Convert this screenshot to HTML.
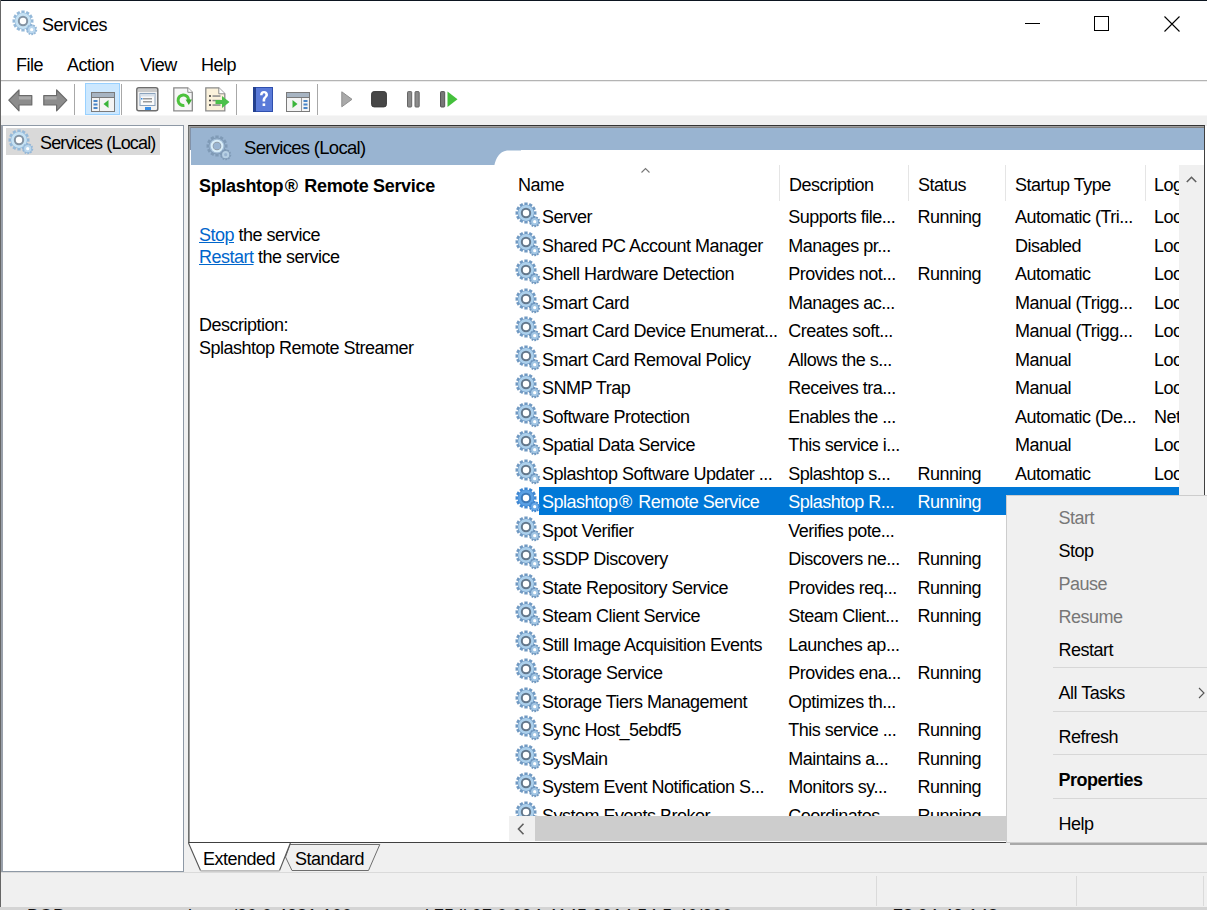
<!DOCTYPE html>
<html><head><meta charset="utf-8">
<style>
*{margin:0;padding:0;box-sizing:border-box}
html,body{width:1207px;height:910px;overflow:hidden;background:#fff}
body{position:relative;font-family:"Liberation Sans",sans-serif;font-size:18px;color:#000;letter-spacing:-0.5px}
.a{position:absolute;white-space:nowrap;line-height:20px}
.blk{position:absolute}
svg{position:absolute;overflow:visible}
</style></head><body>
<svg width="0" height="0" style="position:absolute">
<defs>
<symbol id="gear" viewBox="0 0 30 30">
 <path d="M14.57 21.25 L14.69 23.46 L11.31 23.46 L11.43 21.25 L10.24 20.93 L9.23 22.91 L6.30 21.22 L7.51 19.36 L6.64 18.49 L4.78 19.70 L3.09 16.77 L5.07 15.76 L4.75 14.57 L2.54 14.69 L2.54 11.31 L4.75 11.43 L5.07 10.24 L3.09 9.23 L4.78 6.30 L6.64 7.51 L7.51 6.64 L6.30 4.78 L9.23 3.09 L10.24 5.07 L11.43 4.75 L11.31 2.54 L14.69 2.54 L14.57 4.75 L15.76 5.07 L16.77 3.09 L19.70 4.78 L18.49 6.64 L19.36 7.51 L21.22 6.30 L22.91 9.23 L20.93 10.24 L21.25 11.43 L23.46 11.31 L23.46 14.69 L21.25 14.57 L20.93 15.76 L22.91 16.77 L21.22 19.70 L19.36 18.49 L18.49 19.36 L19.70 21.22 L16.77 22.91 L15.76 20.93Z" fill="#7099c2"/>
 <circle cx="13" cy="13" r="7.9" fill="#acd0ec"/>
 <circle cx="13" cy="13" r="5.2" fill="#62778c" opacity="1"/>
 <circle cx="13" cy="13" r="3.2" fill="#fff"/>
 <path d="M26.00 21.64 L27.30 21.80 L26.90 23.79 L25.64 23.43 L25.21 24.18 L26.17 25.07 L24.68 26.44 L23.87 25.41 L23.08 25.77 L23.33 27.06 L21.32 27.29 L21.27 25.98 L20.43 25.81 L19.87 26.99 L18.11 26.00 L18.84 24.91 L18.26 24.27 L17.11 24.91 L16.27 23.07 L17.50 22.62 L17.40 21.76 L16.10 21.60 L16.50 19.61 L17.76 19.97 L18.19 19.22 L17.23 18.33 L18.72 16.96 L19.53 17.99 L20.32 17.63 L20.07 16.34 L22.08 16.11 L22.13 17.42 L22.97 17.59 L23.53 16.41 L25.29 17.40 L24.56 18.49 L25.14 19.13 L26.29 18.49 L27.13 20.33 L25.90 20.78Z" fill="#6f97bf"/>
 <circle cx="21.7" cy="21.7" r="3.6" fill="#a2c6e4"/>
 <circle cx="21.7" cy="21.7" r="1.6" fill="#fff"/>
</symbol><symbol id="gears" viewBox="0 0 30 30">
 <path d="M14.57 21.25 L14.69 23.46 L11.31 23.46 L11.43 21.25 L10.24 20.93 L9.23 22.91 L6.30 21.22 L7.51 19.36 L6.64 18.49 L4.78 19.70 L3.09 16.77 L5.07 15.76 L4.75 14.57 L2.54 14.69 L2.54 11.31 L4.75 11.43 L5.07 10.24 L3.09 9.23 L4.78 6.30 L6.64 7.51 L7.51 6.64 L6.30 4.78 L9.23 3.09 L10.24 5.07 L11.43 4.75 L11.31 2.54 L14.69 2.54 L14.57 4.75 L15.76 5.07 L16.77 3.09 L19.70 4.78 L18.49 6.64 L19.36 7.51 L21.22 6.30 L22.91 9.23 L20.93 10.24 L21.25 11.43 L23.46 11.31 L23.46 14.69 L21.25 14.57 L20.93 15.76 L22.91 16.77 L21.22 19.70 L19.36 18.49 L18.49 19.36 L19.70 21.22 L16.77 22.91 L15.76 20.93Z" fill="#3f87d2"/>
 <circle cx="13" cy="13" r="7.9" fill="#5aa0e4"/>
 <circle cx="13" cy="13" r="5.2" fill="#3b78b8" opacity="1"/>
 <circle cx="13" cy="13" r="3.2" fill="#fff"/>
 <path d="M26.00 21.64 L27.30 21.80 L26.90 23.79 L25.64 23.43 L25.21 24.18 L26.17 25.07 L24.68 26.44 L23.87 25.41 L23.08 25.77 L23.33 27.06 L21.32 27.29 L21.27 25.98 L20.43 25.81 L19.87 26.99 L18.11 26.00 L18.84 24.91 L18.26 24.27 L17.11 24.91 L16.27 23.07 L17.50 22.62 L17.40 21.76 L16.10 21.60 L16.50 19.61 L17.76 19.97 L18.19 19.22 L17.23 18.33 L18.72 16.96 L19.53 17.99 L20.32 17.63 L20.07 16.34 L22.08 16.11 L22.13 17.42 L22.97 17.59 L23.53 16.41 L25.29 17.40 L24.56 18.49 L25.14 19.13 L26.29 18.49 L27.13 20.33 L25.90 20.78Z" fill="#3f87d2"/>
 <circle cx="21.7" cy="21.7" r="3.6" fill="#6aaae8"/>
 <circle cx="21.7" cy="21.7" r="1.6" fill="#fff"/>
</symbol><symbol id="gearf" viewBox="0 0 30 30">
 <path d="M14.57 21.25 L14.69 23.46 L11.31 23.46 L11.43 21.25 L10.24 20.93 L9.23 22.91 L6.30 21.22 L7.51 19.36 L6.64 18.49 L4.78 19.70 L3.09 16.77 L5.07 15.76 L4.75 14.57 L2.54 14.69 L2.54 11.31 L4.75 11.43 L5.07 10.24 L3.09 9.23 L4.78 6.30 L6.64 7.51 L7.51 6.64 L6.30 4.78 L9.23 3.09 L10.24 5.07 L11.43 4.75 L11.31 2.54 L14.69 2.54 L14.57 4.75 L15.76 5.07 L16.77 3.09 L19.70 4.78 L18.49 6.64 L19.36 7.51 L21.22 6.30 L22.91 9.23 L20.93 10.24 L21.25 11.43 L23.46 11.31 L23.46 14.69 L21.25 14.57 L20.93 15.76 L22.91 16.77 L21.22 19.70 L19.36 18.49 L18.49 19.36 L19.70 21.22 L16.77 22.91 L15.76 20.93Z" fill="#95b9d9"/>
 <circle cx="13" cy="13" r="7.9" fill="#c6e2f4"/>
 <circle cx="13" cy="13" r="5.2" fill="#8393a3" opacity="1"/>
 <circle cx="13" cy="13" r="3.2" fill="#fff"/>
 <path d="M26.00 21.64 L27.30 21.80 L26.90 23.79 L25.64 23.43 L25.21 24.18 L26.17 25.07 L24.68 26.44 L23.87 25.41 L23.08 25.77 L23.33 27.06 L21.32 27.29 L21.27 25.98 L20.43 25.81 L19.87 26.99 L18.11 26.00 L18.84 24.91 L18.26 24.27 L17.11 24.91 L16.27 23.07 L17.50 22.62 L17.40 21.76 L16.10 21.60 L16.50 19.61 L17.76 19.97 L18.19 19.22 L17.23 18.33 L18.72 16.96 L19.53 17.99 L20.32 17.63 L20.07 16.34 L22.08 16.11 L22.13 17.42 L22.97 17.59 L23.53 16.41 L25.29 17.40 L24.56 18.49 L25.14 19.13 L26.29 18.49 L27.13 20.33 L25.90 20.78Z" fill="#93b7d8"/>
 <circle cx="21.7" cy="21.7" r="3.6" fill="#bad7ee"/>
 <circle cx="21.7" cy="21.7" r="1.6" fill="#fff"/>
</symbol><symbol id="gearh" viewBox="0 0 30 30">
 <path d="M14.57 21.25 L14.69 23.46 L11.31 23.46 L11.43 21.25 L10.24 20.93 L9.23 22.91 L6.30 21.22 L7.51 19.36 L6.64 18.49 L4.78 19.70 L3.09 16.77 L5.07 15.76 L4.75 14.57 L2.54 14.69 L2.54 11.31 L4.75 11.43 L5.07 10.24 L3.09 9.23 L4.78 6.30 L6.64 7.51 L7.51 6.64 L6.30 4.78 L9.23 3.09 L10.24 5.07 L11.43 4.75 L11.31 2.54 L14.69 2.54 L14.57 4.75 L15.76 5.07 L16.77 3.09 L19.70 4.78 L18.49 6.64 L19.36 7.51 L21.22 6.30 L22.91 9.23 L20.93 10.24 L21.25 11.43 L23.46 11.31 L23.46 14.69 L21.25 14.57 L20.93 15.76 L22.91 16.77 L21.22 19.70 L19.36 18.49 L18.49 19.36 L19.70 21.22 L16.77 22.91 L15.76 20.93Z" fill="#7f9ab6"/>
 <circle cx="13" cy="13" r="7.6" fill="#9fbad5"/>
 <circle cx="13" cy="13" r="6.3" fill="#d9eef9"/>
 <circle cx="13" cy="13" r="4.3" fill="#8e979f"/>
 <circle cx="13" cy="13" r="3.6" fill="#99b4d1"/>
 <path d="M26.00 21.64 L27.30 21.80 L26.90 23.79 L25.64 23.43 L25.21 24.18 L26.17 25.07 L24.68 26.44 L23.87 25.41 L23.08 25.77 L23.33 27.06 L21.32 27.29 L21.27 25.98 L20.43 25.81 L19.87 26.99 L18.11 26.00 L18.84 24.91 L18.26 24.27 L17.11 24.91 L16.27 23.07 L17.50 22.62 L17.40 21.76 L16.10 21.60 L16.50 19.61 L17.76 19.97 L18.19 19.22 L17.23 18.33 L18.72 16.96 L19.53 17.99 L20.32 17.63 L20.07 16.34 L22.08 16.11 L22.13 17.42 L22.97 17.59 L23.53 16.41 L25.29 17.40 L24.56 18.49 L25.14 19.13 L26.29 18.49 L27.13 20.33 L25.90 20.78Z" fill="#7f9ab6"/>
 <circle cx="21.7" cy="21.7" r="3.6" fill="#b7d0e4"/>
 <circle cx="21.7" cy="21.7" r="1.6" fill="#99b4d1"/>
</symbol>
</defs>
</svg>

<!-- window borders -->
<div class="blk" style="left:0;top:0;width:1207px;height:1px;background:#0c1520"></div>
<div class="blk" style="left:0;top:0;width:1px;height:907px;background:#666"></div>

<!-- title bar -->
<svg style="left:10px;top:8px" width="30" height="30"><use href="#gearf"/></svg>
<div class="a" style="left:42px;top:15px">Services</div>
<!-- caption buttons -->
<div class="blk" style="left:1025px;top:23px;width:15px;height:1px;background:#000"></div>
<div class="blk" style="left:1094px;top:16px;width:15px;height:15px;border:1px solid #000"></div>
<svg style="left:1164px;top:16px" width="16" height="16"><path d="M0.5 0.5L15.5 15.5M15.5 0.5L0.5 15.5" stroke="#000" stroke-width="1.1"/></svg>

<!-- menu bar -->
<div class="a" style="left:16px;top:55px">File</div>
<div class="a" style="left:67px;top:55px">Action</div>
<div class="a" style="left:140px;top:55px">View</div>
<div class="a" style="left:201px;top:55px">Help</div>
<div class="blk" style="left:1px;top:80px;width:1206px;height:1px;background:#b4b4b4"></div><div class="blk" style="left:1px;top:81px;width:1206px;height:1px;background:#ececec"></div>


<!-- toolbar icons -->
<svg style="left:8px;top:89px" width="25" height="23"><path d="M0.8 11.2L11 1v5.5h12.8v9.5H11v5.8z" fill="#8c8c8c" stroke="#6a6a6a" stroke-width="1.2" stroke-linejoin="round"/><path d="M11 7.5h12v3H11z" fill="#a9a9a9"/></svg>
<svg style="left:43px;top:89px" width="25" height="23"><path d="M23.8 11.2L13.6 1v5.5H0.8v9.5h12.8v5.8z" fill="#8c8c8c" stroke="#6a6a6a" stroke-width="1.2" stroke-linejoin="round"/><path d="M1.6 7.5h12v3h-12z" fill="#a9a9a9"/></svg>
<div class="blk" style="left:74px;top:84px;width:1px;height:31px;background:#a8a8a8"></div>
<div class="blk" style="left:85px;top:83px;width:35px;height:32px;background:#cce8ff;border:1px solid #99d1ff"></div>
<svg style="left:91px;top:92px" width="24" height="20"><rect x="0.5" y="0.5" width="23" height="19" fill="#f4f4f4" stroke="#7a7a7a"/><rect x="1" y="1" width="22" height="4" fill="#a7b4c2"/><rect x="1" y="5" width="22" height="1" fill="#7a7a7a"/><rect x="8" y="6" width="1" height="13" fill="#9a9a9a"/><rect x="2.5" y="8" width="4" height="2" fill="#4a86c8"/><rect x="2.5" y="11.5" width="4" height="2" fill="#4a86c8"/><rect x="2.5" y="15" width="4" height="2" fill="#4a86c8"/><path d="M17.5 8v8l-5-4z" fill="#3bb53b"/></svg>
<div class="blk" style="left:121px;top:84px;width:1px;height:31px;background:#a8a8a8"></div>
<svg style="left:136px;top:87px" width="23" height="25"><rect x="0.8" y="0.8" width="21" height="23" rx="2" fill="#f2f2f2" stroke="#6e6e6e" stroke-width="1.5"/><rect x="2" y="2" width="19" height="3" fill="#c9c9c9"/><rect x="4" y="6.5" width="15" height="12" fill="#fafafa" stroke="#8aa2bc"/><rect x="4.5" y="7" width="14" height="2.5" fill="#d7e0ea"/><rect x="7" y="11" width="9" height="1.5" fill="#9a9a9a"/><rect x="7" y="14" width="9" height="1.5" fill="#9a9a9a"/><rect x="5" y="11" width="1.5" height="1.5" fill="#3a8ee6"/><rect x="9" y="20" width="6" height="3" fill="#3a8ee6"/></svg>
<svg style="left:173px;top:87px" width="21" height="25"><path d="M0.8 0.8h14l4.5 4.5v18.5h-18.5z" fill="#f6f6f6" stroke="#8a8a8a" stroke-width="1.3"/><path d="M14.8 0.8v4.5h4.5" fill="#fff" stroke="#8a8a8a" stroke-width="1"/><path d="M11.4 18.4A5.3 5.3 0 1 1 15.7 13.2" fill="none" stroke="#4cc23c" stroke-width="3"/><path d="M12.6 12.6h6.4l-3.2 5.4z" fill="#3aab2e"/></svg>
<svg style="left:205px;top:87px" width="25" height="25"><path d="M0.8 0.8h13l6 6v17h-19z" fill="#fbf2dc" stroke="#8a8a8a" stroke-width="1.3"/><path d="M13.8 0.8v6h6" fill="#fff" stroke="#8a8a8a" stroke-width="1"/><circle cx="5" cy="9" r="1" fill="#333"/><circle cx="5" cy="13.5" r="1" fill="#333"/><circle cx="5" cy="18" r="1" fill="#333"/><rect x="7.5" y="8.3" width="8" height="1.5" fill="#8a8a8a"/><rect x="7.5" y="12.8" width="8" height="1.5" fill="#8a8a8a"/><rect x="7.5" y="17.3" width="8" height="1.5" fill="#8a8a8a"/><path d="M10.5 13h6.5v-4l7.5 6l-7.5 6v-4h-6.5z" fill="#4cc04a"/></svg>
<div class="blk" style="left:236px;top:84px;width:1px;height:31px;background:#a8a8a8"></div>
<svg style="left:253px;top:87px" width="20" height="25"><rect x="0" y="0" width="20" height="25" fill="#2f4fae"/><rect x="3" y="1" width="16" height="23" fill="#5a7ad8"/><rect x="0" y="0" width="3" height="25" fill="#23408f"/><path d="M7 8.2c0-2.6 1.6-4.2 4-4.2s4 1.4 4 3.8c0 2.6-2.8 3-2.8 5.6v1.2h-2.6v-1.6c0-3 2.8-3.4 2.8-5.2 0-1-.6-1.6-1.4-1.6-1 0-1.4.8-1.4 2z" fill="#fff"/><rect x="9.6" y="16.4" width="2.6" height="2.6" fill="#fff"/></svg>
<svg style="left:286px;top:92px" width="24" height="20"><rect x="0.5" y="0.5" width="23" height="19" fill="#f4f4f4" stroke="#7a7a7a"/><rect x="1" y="1" width="22" height="4" fill="#a7b4c2"/><rect x="1" y="5" width="22" height="1" fill="#7a7a7a"/><rect x="15" y="6" width="1" height="13" fill="#9a9a9a"/><rect x="17.5" y="8" width="4" height="2" fill="#4a86c8"/><rect x="17.5" y="11.5" width="4" height="2" fill="#4a86c8"/><rect x="17.5" y="15" width="4" height="2" fill="#4a86c8"/><path d="M6.5 8v8l5-4z" fill="#3bb53b"/></svg>
<div class="blk" style="left:317px;top:84px;width:1px;height:31px;background:#a8a8a8"></div>
<svg style="left:341px;top:91px" width="12" height="17"><path d="M0.8 0.8L11 8.3L0.8 15.8z" fill="#a9a9a9" stroke="#8f8f8f" stroke-width="1"/></svg>
<svg style="left:371px;top:91px" width="16" height="17"><rect x="0.6" y="0.6" width="14.8" height="15.3" rx="2.5" fill="#474747" stroke="#3a3a3a"/></svg>
<svg style="left:407px;top:91px" width="13" height="17"><rect x="0.5" y="0.6" width="4.2" height="15.4" rx="0.8" fill="#8a8a8a" stroke="#666"/><rect x="8" y="0.6" width="4.2" height="15.4" rx="0.8" fill="#8a8a8a" stroke="#666"/></svg>
<svg style="left:440px;top:91px" width="18" height="17"><rect x="0.5" y="0.6" width="4.2" height="15.4" rx="0.8" fill="#777" stroke="#555"/><path d="M7.5 0.6L17.5 8.3L7.5 16z" fill="#44c03c"/></svg>
<div class="blk" style="left:1px;top:115px;width:1206px;height:1px;background:#f7f7f7"></div>

<!-- toolbar band -->
<div class="blk" style="left:1px;top:116px;width:1206px;height:10px;background:#f0f0f0"></div>

<!-- left tree pane -->
<div class="blk" style="left:1px;top:125px;width:183px;height:747px;border:1px solid #8e99a6;border-left:2px solid #9aa1ab;background:#fff"></div>
<div class="blk" style="left:184px;top:125px;width:5px;height:747px;background:#f0f0f0"></div>
<div class="blk" style="left:6px;top:128px;width:154px;height:27px;background:#d9d9d9"></div>
<svg style="left:6.4px;top:127.4px" width="30" height="30"><use href="#gearf"/></svg>
<div class="a" style="left:40px;top:132.9px;letter-spacing:-0.85px">Services (Local)</div>

<!-- right pane -->
<div class="blk" style="left:188px;top:125px;width:1017px;height:718px;border-left:1px solid #6e706e;border-top:1px solid #353535;border-right:1px solid #404040;border-bottom:1px solid #404040;background:#fff;box-shadow:inset 1px 1px 0 #a0a0a0"></div>
<div class="blk" style="left:190px;top:127px;width:1014px;height:23px;background:#99b4d1;border-top:1px solid #7f7f7f;border-left:1px solid #8292a8"></div>
<div class="blk" style="left:191px;top:150px;width:330px;height:15px;background:#99b4d1"></div>
<svg style="left:204px;top:132.8px" width="30" height="30"><use href="#gearh"/></svg>
<div class="a" style="left:244px;top:138.2px;font-size:18.5px;letter-spacing:-0.7px">Services (Local)</div>

<div class="a" style="left:199px;top:175.6px;font-weight:bold;letter-spacing:-0.32px">Splashtop<span style="margin:0 2px 0 1.5px">®</span> Remote Service</div>
<div class="a" style="left:199px;top:225.1px"><span style="color:#0066cc;text-decoration:underline">Stop</span> the service</div>
<div class="a" style="left:199px;top:247.3px"><span style="color:#0066cc;text-decoration:underline">Restart</span> the service</div>
<div class="a" style="left:199px;top:315.2px">Description:</div>
<div class="a" style="left:199px;top:337.8px">Splashtop Remote Streamer</div>


<!-- list view -->
<svg style="left:494px;top:150px" width="710" height="20"><path d="M0.3 15.5 C1.2 11.5 2.2 8.5 4.5 5.5 C6.5 2.8 8.8 1 13 0.4 L710 0.4 L710 20 L0.3 20Z" fill="#fff"/></svg>
<div class="blk" style="left:509px;top:165px;width:670px;height:651px;overflow:hidden;background:#fff">
 <div class="a" style="left:9px;top:10.3px">Name</div>
 <svg style="left:132px;top:2px" width="9" height="6"><path d="M0.5 5.5L4.5 1.5L8.5 5.5" stroke="#777" fill="none" stroke-width="1.1"/></svg>
 <div class="blk" style="left:270px;top:0;width:1px;height:36px;background:#e5e5e5"></div>
 <div class="a" style="left:280px;top:10.3px">Description</div>
 <div class="blk" style="left:399px;top:0;width:1px;height:36px;background:#e5e5e5"></div>
 <div class="a" style="left:409px;top:10.3px">Status</div>
 <div class="blk" style="left:496px;top:0;width:1px;height:36px;background:#e5e5e5"></div>
 <div class="a" style="left:506px;top:10.3px">Startup Type</div>
 <div class="blk" style="left:636px;top:0;width:1px;height:36px;background:#e5e5e5"></div>
 <div class="a" style="left:645px;top:10.3px">Log On As</div>
<svg style="left:4px;top:35.30px" width="30" height="30"><use href="#gear"/></svg>
<div class="a" style="left:33px;top:42.20px;color:#000">Server</div>
<div class="a" style="left:279.3px;top:42.20px;color:#000">Supports file...</div>
<div class="a" style="left:408.5px;top:42.20px;color:#000">Running</div>
<div class="a" style="left:506px;top:42.20px;color:#000">Automatic (Tri...</div>
<div class="a" style="left:645px;top:42.20px;color:#000">Loc</div>
<svg style="left:4px;top:63.80px" width="30" height="30"><use href="#gear"/></svg>
<div class="a" style="left:33px;top:70.70px;color:#000">Shared PC Account Manager</div>
<div class="a" style="left:279.3px;top:70.70px;color:#000">Manages pr...</div>
<div class="a" style="left:506px;top:70.70px;color:#000">Disabled</div>
<div class="a" style="left:645px;top:70.70px;color:#000">Loc</div>
<svg style="left:4px;top:92.30px" width="30" height="30"><use href="#gear"/></svg>
<div class="a" style="left:33px;top:99.20px;color:#000">Shell Hardware Detection</div>
<div class="a" style="left:279.3px;top:99.20px;color:#000">Provides not...</div>
<div class="a" style="left:408.5px;top:99.20px;color:#000">Running</div>
<div class="a" style="left:506px;top:99.20px;color:#000">Automatic</div>
<div class="a" style="left:645px;top:99.20px;color:#000">Loc</div>
<svg style="left:4px;top:120.80px" width="30" height="30"><use href="#gear"/></svg>
<div class="a" style="left:33px;top:127.70px;color:#000">Smart Card</div>
<div class="a" style="left:279.3px;top:127.70px;color:#000">Manages ac...</div>
<div class="a" style="left:506px;top:127.70px;color:#000">Manual (Trigg...</div>
<div class="a" style="left:645px;top:127.70px;color:#000">Loc</div>
<svg style="left:4px;top:149.30px" width="30" height="30"><use href="#gear"/></svg>
<div class="a" style="left:33px;top:156.20px;color:#000">Smart Card Device Enumerat...</div>
<div class="a" style="left:279.3px;top:156.20px;color:#000">Creates soft...</div>
<div class="a" style="left:506px;top:156.20px;color:#000">Manual (Trigg...</div>
<div class="a" style="left:645px;top:156.20px;color:#000">Loc</div>
<svg style="left:4px;top:177.80px" width="30" height="30"><use href="#gear"/></svg>
<div class="a" style="left:33px;top:184.70px;color:#000">Smart Card Removal Policy</div>
<div class="a" style="left:279.3px;top:184.70px;color:#000">Allows the s...</div>
<div class="a" style="left:506px;top:184.70px;color:#000">Manual</div>
<div class="a" style="left:645px;top:184.70px;color:#000">Loc</div>
<svg style="left:4px;top:206.30px" width="30" height="30"><use href="#gear"/></svg>
<div class="a" style="left:33px;top:213.20px;color:#000">SNMP Trap</div>
<div class="a" style="left:279.3px;top:213.20px;color:#000">Receives tra...</div>
<div class="a" style="left:506px;top:213.20px;color:#000">Manual</div>
<div class="a" style="left:645px;top:213.20px;color:#000">Loc</div>
<svg style="left:4px;top:234.80px" width="30" height="30"><use href="#gear"/></svg>
<div class="a" style="left:33px;top:241.70px;color:#000">Software Protection</div>
<div class="a" style="left:279.3px;top:241.70px;color:#000">Enables the ...</div>
<div class="a" style="left:506px;top:241.70px;color:#000">Automatic (De...</div>
<div class="a" style="left:645px;top:241.70px;color:#000">Net</div>
<svg style="left:4px;top:263.30px" width="30" height="30"><use href="#gear"/></svg>
<div class="a" style="left:33px;top:270.20px;color:#000">Spatial Data Service</div>
<div class="a" style="left:279.3px;top:270.20px;color:#000">This service i...</div>
<div class="a" style="left:506px;top:270.20px;color:#000">Manual</div>
<div class="a" style="left:645px;top:270.20px;color:#000">Loc</div>
<svg style="left:4px;top:291.80px" width="30" height="30"><use href="#gear"/></svg>
<div class="a" style="left:33px;top:298.70px;color:#000">Splashtop Software Updater ...</div>
<div class="a" style="left:279.3px;top:298.70px;color:#000">Splashtop s...</div>
<div class="a" style="left:408.5px;top:298.70px;color:#000">Running</div>
<div class="a" style="left:506px;top:298.70px;color:#000">Automatic</div>
<div class="a" style="left:645px;top:298.70px;color:#000">Loc</div>
<div class="blk" style="left:30px;top:321.50px;width:640px;height:28px;background:#0078d7"></div>
<svg style="left:4px;top:320.30px" width="30" height="30"><use href="#gears"/></svg>
<div class="a" style="left:33px;top:327.20px;color:#fff">Splashtop<span style="margin:0 2px 0 1.5px">®</span> Remote Service</div>
<div class="a" style="left:279.3px;top:327.20px;color:#fff">Splashtop R...</div>
<div class="a" style="left:408.5px;top:327.20px;color:#fff">Running</div>
<div class="a" style="left:506px;top:327.20px;color:#fff">Automatic</div>
<div class="a" style="left:645px;top:327.20px;color:#fff">Loc</div>
<svg style="left:4px;top:348.80px" width="30" height="30"><use href="#gear"/></svg>
<div class="a" style="left:33px;top:355.70px;color:#000">Spot Verifier</div>
<div class="a" style="left:279.3px;top:355.70px;color:#000">Verifies pote...</div>
<div class="a" style="left:506px;top:355.70px;color:#000">Manual (Trigg...</div>
<div class="a" style="left:645px;top:355.70px;color:#000">Loc</div>
<svg style="left:4px;top:377.30px" width="30" height="30"><use href="#gear"/></svg>
<div class="a" style="left:33px;top:384.20px;color:#000">SSDP Discovery</div>
<div class="a" style="left:279.3px;top:384.20px;color:#000">Discovers ne...</div>
<div class="a" style="left:408.5px;top:384.20px;color:#000">Running</div>
<div class="a" style="left:506px;top:384.20px;color:#000">Manual</div>
<div class="a" style="left:645px;top:384.20px;color:#000">Loc</div>
<svg style="left:4px;top:405.80px" width="30" height="30"><use href="#gear"/></svg>
<div class="a" style="left:33px;top:412.70px;color:#000">State Repository Service</div>
<div class="a" style="left:279.3px;top:412.70px;color:#000">Provides req...</div>
<div class="a" style="left:408.5px;top:412.70px;color:#000">Running</div>
<div class="a" style="left:506px;top:412.70px;color:#000">Manual</div>
<div class="a" style="left:645px;top:412.70px;color:#000">Loc</div>
<svg style="left:4px;top:434.30px" width="30" height="30"><use href="#gear"/></svg>
<div class="a" style="left:33px;top:441.20px;color:#000">Steam Client Service</div>
<div class="a" style="left:279.3px;top:441.20px;color:#000">Steam Client...</div>
<div class="a" style="left:408.5px;top:441.20px;color:#000">Running</div>
<div class="a" style="left:506px;top:441.20px;color:#000">Manual</div>
<div class="a" style="left:645px;top:441.20px;color:#000">Loc</div>
<svg style="left:4px;top:462.80px" width="30" height="30"><use href="#gear"/></svg>
<div class="a" style="left:33px;top:469.70px;color:#000">Still Image Acquisition Events</div>
<div class="a" style="left:279.3px;top:469.70px;color:#000">Launches ap...</div>
<div class="a" style="left:506px;top:469.70px;color:#000">Manual</div>
<div class="a" style="left:645px;top:469.70px;color:#000">Loc</div>
<svg style="left:4px;top:491.30px" width="30" height="30"><use href="#gear"/></svg>
<div class="a" style="left:33px;top:498.20px;color:#000">Storage Service</div>
<div class="a" style="left:279.3px;top:498.20px;color:#000">Provides ena...</div>
<div class="a" style="left:408.5px;top:498.20px;color:#000">Running</div>
<div class="a" style="left:506px;top:498.20px;color:#000">Automatic (De...</div>
<div class="a" style="left:645px;top:498.20px;color:#000">Loc</div>
<svg style="left:4px;top:519.80px" width="30" height="30"><use href="#gear"/></svg>
<div class="a" style="left:33px;top:526.70px;color:#000">Storage Tiers Management</div>
<div class="a" style="left:279.3px;top:526.70px;color:#000">Optimizes th...</div>
<div class="a" style="left:506px;top:526.70px;color:#000">Manual</div>
<div class="a" style="left:645px;top:526.70px;color:#000">Loc</div>
<svg style="left:4px;top:548.30px" width="30" height="30"><use href="#gear"/></svg>
<div class="a" style="left:33px;top:555.20px;color:#000">Sync Host_5ebdf5</div>
<div class="a" style="left:279.3px;top:555.20px;color:#000">This service ...</div>
<div class="a" style="left:408.5px;top:555.20px;color:#000">Running</div>
<div class="a" style="left:506px;top:555.20px;color:#000">Automatic (De...</div>
<div class="a" style="left:645px;top:555.20px;color:#000">Loc</div>
<svg style="left:4px;top:576.80px" width="30" height="30"><use href="#gear"/></svg>
<div class="a" style="left:33px;top:583.70px;color:#000">SysMain</div>
<div class="a" style="left:279.3px;top:583.70px;color:#000">Maintains a...</div>
<div class="a" style="left:408.5px;top:583.70px;color:#000">Running</div>
<div class="a" style="left:506px;top:583.70px;color:#000">Automatic</div>
<div class="a" style="left:645px;top:583.70px;color:#000">Loc</div>
<svg style="left:4px;top:605.30px" width="30" height="30"><use href="#gear"/></svg>
<div class="a" style="left:33px;top:612.20px;color:#000">System Event Notification S...</div>
<div class="a" style="left:279.3px;top:612.20px;color:#000">Monitors sy...</div>
<div class="a" style="left:408.5px;top:612.20px;color:#000">Running</div>
<div class="a" style="left:506px;top:612.20px;color:#000">Automatic</div>
<div class="a" style="left:645px;top:612.20px;color:#000">Loc</div>
<svg style="left:4px;top:633.80px" width="30" height="30"><use href="#gear"/></svg>
<div class="a" style="left:33px;top:640.70px;color:#000">System Events Broker</div>
<div class="a" style="left:279.3px;top:640.70px;color:#000">Coordinates...</div>
<div class="a" style="left:408.5px;top:640.70px;color:#000">Running</div>
<div class="a" style="left:506px;top:640.70px;color:#000">Automatic (Tri...</div>
<div class="a" style="left:645px;top:640.70px;color:#000">Loc</div>
</div>
<!-- vertical scrollbar -->
<div class="blk" style="left:1179px;top:165px;width:25px;height:651px;background:#f0f0f0"></div>
<svg style="left:1186px;top:176px" width="11" height="7"><path d="M0.8 6L5.5 1.3L10.2 6" stroke="#606060" fill="none" stroke-width="1.6"/></svg>
<!-- horizontal scrollbar -->
<div class="blk" style="left:509px;top:816px;width:670px;height:25px;background:#f0f0f0"></div>
<div class="blk" style="left:535px;top:816px;width:500px;height:25px;background:#cdcdcd"></div>
<svg style="left:517px;top:823px" width="8" height="12"><path d="M6.5 0.8L1.5 6L6.5 11.2" stroke="#606060" fill="none" stroke-width="1.6"/></svg>

<!-- status bar -->
<div class="blk" style="left:1px;top:872px;width:1206px;height:35px;background:#f0f0f0;border-top:1px solid #dadada"></div>
<div class="blk" style="left:876px;top:876px;width:1px;height:30px;background:#dadada"></div>
<div class="blk" style="left:1076px;top:876px;width:1px;height:30px;background:#dadada"></div><div class="blk" style="left:1203px;top:876px;width:1px;height:30px;background:#dadada"></div>
<div class="blk" style="left:0;top:907px;width:1207px;height:3px;background:#d4d4d4;overflow:hidden">
<div class="a" style="left:27px;top:-1.3px;color:#111;letter-spacing:0">BOB</div>
<div class="a" style="left:188px;top:-1.3px;color:#111;letter-spacing:0">l</div>
<div class="a" style="left:232px;top:-1.3px;color:#111;letter-spacing:0">/30.0.4381.100</div>
<div class="a" style="left:425px;top:-1.3px;color:#111;letter-spacing:0">l 75 ll 97  0.094  4145.3914.54  5 46/300</div>
<div class="a" style="left:893px;top:-1.3px;color:#111;letter-spacing:0">78.94.43.148</div>
</div>


<!-- tabs -->
<div class="blk" style="left:184px;top:843px;width:1023px;height:29px;background:#f0f0f0"></div>
<svg style="left:184px;top:840px" width="210" height="33"><path d="M106 4.5L195.8 4.5L184.5 30.5L108 30.5L101.5 17z" fill="#f0f0f0" stroke="#6e6e6e" stroke-width="1"/><path d="M4.5 3L16.5 30.5L95.5 30.5L106.4 3z" fill="#fff"/><path d="M4.5 3L16.5 30.5M95.5 30.5L106.4 3" stroke="#555" stroke-width="1.1" fill="none"/><path d="M16.5 30.8H95.5" stroke="#aaa" stroke-width="1.2"/></svg>
<div class="a" style="left:203px;top:848.7px">Extended</div>
<div class="a" style="left:295px;top:848.7px">Standard</div>

<!-- context menu -->
<div class="blk" style="left:1010px;top:843px;width:197px;height:2px;background:#8a8a8a;opacity:0.7"></div>
<div class="blk" style="left:1006px;top:495px;width:201px;height:348px;background:#f0f0f0;border:1px solid #cdcdcd;border-right:none"></div>
<div class="a" style="left:1058.5px;top:508.2px;color:#777">Start</div>
<div class="a" style="left:1058.5px;top:541.2px">Stop</div>
<div class="a" style="left:1058.5px;top:573.7px;color:#777">Pause</div>
<div class="a" style="left:1058.5px;top:606.7px;color:#777">Resume</div>
<div class="a" style="left:1058.5px;top:639.7px">Restart</div>
<div class="blk" style="left:1053px;top:667px;width:154px;height:1px;background:#d7d7d7"></div>
<div class="a" style="left:1058.5px;top:683.2px">All Tasks</div>
<svg style="left:1198px;top:687px" width="8" height="12"><path d="M1 1L6 6L1 11" stroke="#555" fill="none" stroke-width="1.1"/></svg>
<div class="blk" style="left:1053px;top:711px;width:154px;height:1px;background:#d7d7d7"></div>
<div class="a" style="left:1058.5px;top:726.7px">Refresh</div>
<div class="blk" style="left:1053px;top:754px;width:154px;height:1px;background:#d7d7d7"></div>
<div class="a" style="left:1058.5px;top:770.3px;font-weight:bold">Properties</div>
<div class="blk" style="left:1053px;top:798px;width:154px;height:1px;background:#d7d7d7"></div>
<div class="a" style="left:1058.5px;top:814.4px">Help</div>

</body></html>
